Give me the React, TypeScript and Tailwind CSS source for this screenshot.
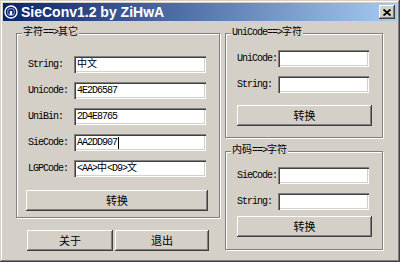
import React from "react";

const mono = "font-['Liberation_Mono','Noto_Sans_CJK_SC',monospace] text-[10px] tracking-[-1px] text-black";
const cj = "tracking-normal";

const raised =
  "shadow-[inset_-1px_-1px_0_#404040,inset_1px_1px_0_#ffffff,inset_-2px_-2px_0_#808080,inset_2px_2px_0_#d4d0c8]";
const sunken =
  "shadow-[inset_1px_1px_0_#808080,inset_2px_2px_0_#404040,inset_-1px_-1px_0_#ffffff,inset_-2px_-2px_0_#d4d0c8]";
const etched = "border border-[#808080] shadow-[1px_1px_0_#ffffff,inset_1px_1px_0_#ffffff]";

function TextBox({ w, children }: { w: string; children?: React.ReactNode }) {
  return (
    <div className={`${w} h-[17px] bg-white ${sunken} flex items-center pl-[3px] ${mono} leading-[17px] overflow-hidden whitespace-nowrap`}>
      {children}
    </div>
  );
}

function Row({ label, lw, tw, children, className = "" }: { label: string; lw: string; tw: string; children?: React.ReactNode; className?: string }) {
  return (
    <div className={`flex items-center ${className}`}>
      <div className={`${lw} ${mono} leading-[17px]`}>{label}</div>
      <TextBox w={tw}>{children}</TextBox>
    </div>
  );
}

function Btn({ w, children, className = "" }: { w: string; children: React.ReactNode; className?: string }) {
  return (
    <div className={`${w} h-[21px] ${raised} bg-[#d4d0c8] flex items-center justify-center font-['Noto_Sans_CJK_SC',sans-serif] text-[11px] text-black ${className}`}>
      {children}
    </div>
  );
}

function GroupTitle({ children }: { children: React.ReactNode }) {
  return (
    <div className={`absolute left-[5px] top-[-8px] px-[1px] bg-[#d4d0c8] ${mono} leading-[14px]`}>{children}</div>
  );
}

export default function App() {
  return (
    <div className="w-[400px] h-[262px] bg-[#d4d0c8] p-[3px] flex flex-col shadow-[inset_-1px_-1px_0_#404040,inset_1px_1px_0_#d4d0c8,inset_-2px_-2px_0_#808080,inset_2px_2px_0_#ffffff] overflow-hidden">
      {/* Title bar */}
      <div className="h-[18px] flex items-center bg-[linear-gradient(to_right,#0a246a,#a6caf0)] shrink-0">
        <svg width="14" height="14" viewBox="0 0 14 14" className="ml-[1px]">
          <circle cx="7" cy="7" r="6" fill="#0c1c5c" stroke="#ffffff" strokeWidth="1.4" />
          <circle cx="7" cy="7" r="3.4" fill="none" stroke="#6f8fd8" strokeWidth="1.2" />
          <rect x="5.8" y="6" width="2.4" height="4" fill="#ffffff" />
        </svg>
        <div className="ml-[3px] font-['Liberation_Sans',Arial,sans-serif] font-bold text-[14px] leading-[18px] text-white whitespace-nowrap">
          SieConv1.2 by ZiHwA
        </div>
        <div className="flex-1" />
        <div className={`w-[16px] h-[14px] mr-[2px] bg-[#d4d0c8] ${raised} flex items-center justify-center`}>
          <svg width="8" height="7" viewBox="0 0 8 7">
            <path d="M0.5 0.5 L7.5 6.5 M7.5 0.5 L0.5 6.5" stroke="#000" strokeWidth="1.8" />
          </svg>
        </div>
      </div>

      {/* Content */}
      <div className="flex pl-[13px] pt-[12px]">
        {/* Left column */}
        <div className="w-[204px] flex flex-col">
          <div className={`relative w-[204px] h-[185px] ${etched} pt-[22px] pl-[11px]`}>
            <GroupTitle>
              <span className={cj}>字符</span>==&gt;<span className={cj}>其它</span>
            </GroupTitle>
            <div className="flex flex-col gap-[9px]">
              <Row label="String:" lw="w-[46px]" tw="w-[132px]">
                <span className={`${cj} text-[10px]`}>中文</span>
              </Row>
              <Row label="Unicode:" lw="w-[46px]" tw="w-[132px]">4E2D6587</Row>
              <Row label="UniBin:" lw="w-[46px]" tw="w-[132px]">2D4E8765</Row>
              <Row label="SieCode:" lw="w-[46px]" tw="w-[132px]">
                AA2DD907<span className="inline-block w-[1px] h-[12px] bg-black ml-[1px]" />
              </Row>
              <Row label="LGPCode:" lw="w-[46px]" tw="w-[132px]">
                &lt;AA&gt;<span className={cj}>中</span>&lt;D9&gt;<span className={cj}>文</span>
              </Row>
            </div>
            <Btn w="w-[182px]" className="mt-[13px] ml-[-2px]">转换</Btn>
          </div>
          <div className="flex gap-[2px] mt-[12px] ml-[11px]">
            <Btn w="w-[86px]">关于</Btn>
            <Btn w="w-[94px]">退出</Btn>
          </div>
        </div>

        {/* Right column */}
        <div className="w-[158px] ml-[5px] flex flex-col">
          <div className={`relative h-[105px] ${etched} pt-[16px] pl-[11px]`}>
            <GroupTitle>
              UniCode==&gt;<span className={cj}>字符</span>
            </GroupTitle>
            <div className="flex flex-col gap-[9px]">
              <Row label="UniCode:" lw="w-[41px]" tw="w-[91px]" />
              <Row label="String:" lw="w-[41px]" tw="w-[91px]" />
            </div>
            <Btn w="w-[135px]" className="mt-[12px]">转换</Btn>
          </div>
          <div className={`relative h-[99px] mt-[13px] ${etched} pt-[15px] pl-[11px]`}>
            <GroupTitle>
              <span className={cj}>内码</span>==&gt;<span className={cj}>字符</span>
            </GroupTitle>
            <div className="flex flex-col gap-[9px]">
              <Row label="SieCode:" lw="w-[41px]" tw="w-[91px]" />
              <Row label="String:" lw="w-[41px]" tw="w-[91px]" />
            </div>
            <Btn w="w-[135px]" className="mt-[6px]">转换</Btn>
          </div>
        </div>
      </div>
    </div>
  );
}
